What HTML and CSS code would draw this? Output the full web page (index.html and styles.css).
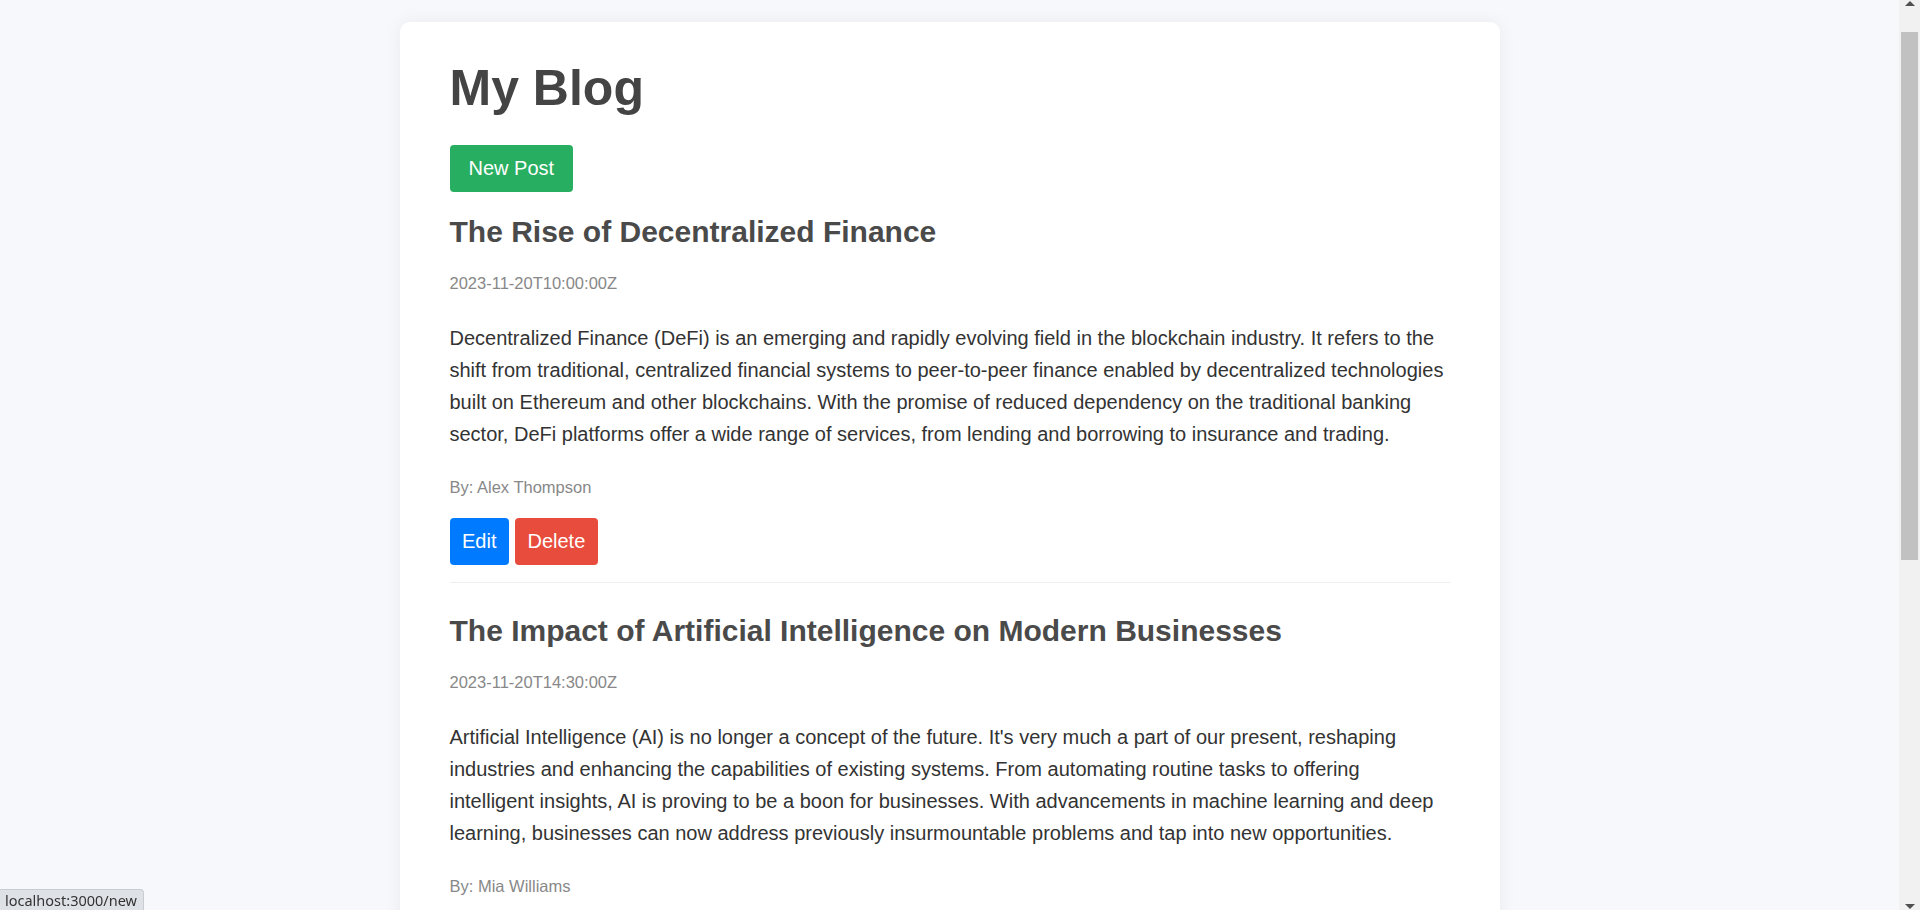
FILE: index.html
```html
<!DOCTYPE html>
<html lang="en">
<head>
<meta charset="utf-8">
<title>My Blog</title>
<link rel="stylesheet" href="styles.css">
</head>
<body>
<main class="card">
  <h1 class="page-title">My Blog</h1>
  <a class="btn btn-new" href="/new">New Post</a>

  <article class="post">
    <h2 class="post-title">The Rise of Decentralized Finance</h2>
    <p class="post-meta post-date">2023-11-20T10:00:00Z</p>
    <p class="post-body">Decentralized Finance (DeFi) is an emerging and rapidly evolving field in the blockchain industry. It refers to the shift from traditional, centralized financial systems to peer-to-peer finance enabled by decentralized technologies built on Ethereum and other blockchains. With the promise of reduced dependency on the traditional banking sector, DeFi platforms offer a wide range of services, from lending and borrowing to insurance and trading.</p>
    <p class="post-meta post-author">By: Alex Thompson</p>
    <div class="post-actions">
      <button class="btn btn-edit" type="button">Edit</button>
      <button class="btn btn-delete" type="button">Delete</button>
    </div>
  </article>

  <article class="post">
    <h2 class="post-title">The Impact of Artificial Intelligence on Modern Businesses</h2>
    <p class="post-meta post-date">2023-11-20T14:30:00Z</p>
    <p class="post-body">Artificial Intelligence (AI) is no longer a concept of the future. It's very much a part of our present, reshaping industries and enhancing the capabilities of existing systems. From automating routine tasks to offering intelligent insights, AI is proving to be a boon for businesses. With advancements in machine learning and deep learning, businesses can now address previously insurmountable problems and tap into new opportunities.</p>
    <p class="post-meta post-author">By: Mia Williams</p>
    <div class="post-actions">
      <button class="btn btn-edit" type="button">Edit</button>
      <button class="btn btn-delete" type="button">Delete</button>
    </div>
  </article>

  <article class="post">
    <h2 class="post-title">Sustainable Living: Tips for an Eco-Friendly Lifestyle</h2>
    <p class="post-meta post-date">2023-11-21T09:15:00Z</p>
    <p class="post-body">Sustainable living is about making choices that reduce our impact on the planet. From cutting down on single-use plastics and conserving energy at home to choosing locally sourced food and greener ways to travel, small everyday changes can add up to a big difference. Adopting an eco-friendly lifestyle not only helps protect the environment for future generations but can also save money and improve our overall well-being and health.</p>
    <p class="post-meta post-author">By: Samuel Green</p>
    <div class="post-actions">
      <button class="btn btn-edit" type="button">Edit</button>
      <button class="btn btn-delete" type="button">Delete</button>
    </div>
  </article>
</main>

<div class="status-bubble">localhost:3000/new</div>

<div class="scrollbar" aria-hidden="true">
  <span class="scroll-arrow scroll-arrow-up"></span>
  <span class="scroll-thumb"></span>
  <span class="scroll-fill"></span>
  <span class="scroll-arrow scroll-arrow-down"></span>
</div>
</body>
</html>
```

FILE: styles.css
```css
html, body {
  margin: 0;
  padding: 0;
}

body {
  background: #f7f8fc;
  font-family: "Liberation Sans", Arial, sans-serif;
  color: #333;
  margin-right: 21px;
}

.card {
  box-sizing: border-box;
  width: 1100px;
  margin: 22px auto 22px;
  padding: 38px 50px 40px;
  background: #fff;
  border-radius: 10px;
  box-shadow: 0 0 18px rgba(0, 0, 0, 0.06);
}

.page-title {
  margin: 0;
  font-size: 50px;
  line-height: 56px;
  font-weight: 700;
  color: #444;
}

.btn {
  display: inline-block;
  box-sizing: border-box;
  height: 47px;
  padding: 12px 12.5px;
  border: none;
  border-radius: 4px;
  font-family: "Liberation Sans", Arial, sans-serif;
  font-size: 20px;
  line-height: 23px;
  color: #fff;
  text-decoration: none;
  cursor: pointer;
}

.btn-new {
  margin-top: 29px;
  padding: 12px 19px;
  background: #27ae60;
}

.btn-edit {
  background: #007bff;
}

.btn-delete {
  background: #e74c3c;
}

.post {
  padding: 30px 0 17px;
  border-bottom: 1px solid #eee;
}

.post:first-of-type {
  padding-top: 22px;
}

.post:last-of-type {
  border-bottom: none;
}

.post-title {
  margin: 0 0 23px;
  font-size: 30px;
  line-height: 36px;
  font-weight: 700;
  color: #4a4a4a;
}

.post-meta {
  margin: 0;
  font-size: 16.5px;
  line-height: 20px;
  color: #888;
}

.post-date {
  margin-bottom: 29px;
}

.post-body {
  margin: 0 0 27px;
  font-size: 20px;
  line-height: 32px;
  color: #333;
}

.post-author {
  margin-bottom: 21px;
}

.post-actions {
  display: flex;
  gap: 6px;
}

.status-bubble {
  position: fixed;
  left: 0;
  bottom: 0;
  box-sizing: border-box;
  height: 21px;
  padding: 0 6px 0 5px;
  background: #dee1e6;
  border: 1px solid #c9ccd1;
  border-left: none;
  border-bottom: none;
  border-top-right-radius: 4px;
  font-family: "Noto Sans", "Open Sans", sans-serif;
  font-size: 14.5px;
  line-height: 21px;
  color: #333;
}

/* browser scrollbar (window chrome) */
.scrollbar {
  position: fixed;
  top: 0;
  right: 0;
  bottom: 0;
  width: 21px;
  display: flex;
  flex-direction: column;
  align-items: center;
  background: #f1f1f1;
}

.scroll-arrow {
  display: flex;
  justify-content: center;
  align-items: center;
  width: 21px;
  height: 17px;
  flex: none;
}

.scroll-arrow::before {
  content: "";
  width: 0;
  height: 0;
  border-left: 5px solid transparent;
  border-right: 5px solid transparent;
}

.scroll-arrow-up {
  align-items: flex-start;
  padding-top: 1px;
  box-sizing: border-box;
}

.scroll-arrow-up::before {
  border-bottom: 5px solid #505050;
}

.scroll-arrow-down {
  align-items: flex-end;
  padding-bottom: 1px;
  box-sizing: border-box;
}

.scroll-arrow-down::before {
  border-top: 5px solid #505050;
}

.scroll-thumb {
  flex: none;
  width: 17px;
  height: 528px;
  margin-top: 15px;
  background: #c1c1c1;
}

.scroll-fill {
  flex: 1;
}
```
